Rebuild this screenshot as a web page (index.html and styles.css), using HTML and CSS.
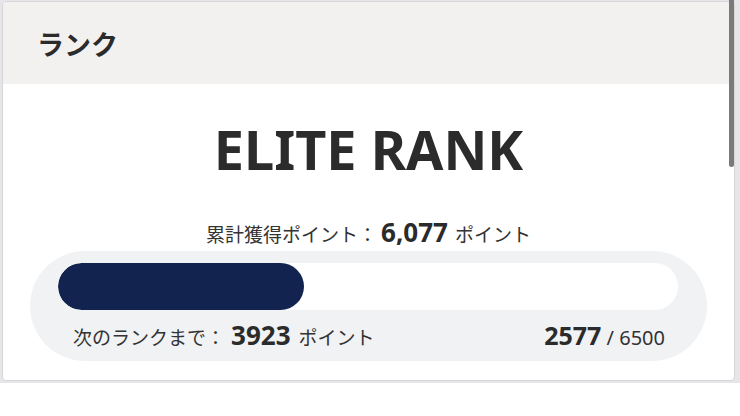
FILE: index.html
```html
<!DOCTYPE html>
<html lang="ja">
<head>
<meta charset="utf-8">
<link rel="stylesheet" href="styles.css">
</head>
<body>
<div class="frame">
  <section class="card">
    <header class="card-head">
      <h2 class="card-title">ランク</h2>
    </header>
    <div class="card-body">
      <div class="rank-name">ELITE RANK</div>
      <div class="total">累計獲得ポイント：<span class="total-num">6,077</span><span class="unit">ポイント</span></div>
      <div class="progress-box">
        <div class="track"><div class="fill" style="width:39.6%"></div></div>
        <div class="progress-row">
          <div class="next">次のランクまで：<span class="num">3923</span><span class="unit">ポイント</span></div>
          <div class="ratio"><span class="num">2577</span> / 6500</div>
        </div>
      </div>
    </div>
  </section>
  <div class="scroll-thumb"></div>
</div>
</body>
</html>
```

FILE: styles.css
```css
html, body {
  margin: 0;
  padding: 0;
  background: #ffffff;
}
body {
  font-family: "Noto Sans CJK JP", "Noto Sans", sans-serif;
  color: #333333;
}
.frame {
  position: relative;
  width: 740px;
  height: 383px;
  background: #e6e6ea;
  box-sizing: border-box;
  padding: 1px 5px 2px 2px;
}
.card {
  height: 380px;
  box-sizing: border-box;
  background: #ffffff;
  border: 1px solid #d6d6d6;
  border-radius: 4px;
  overflow: hidden;
  display: flex;
  flex-direction: column;
}
.card-head {
  height: 82px;
  background: #f2f1f0;
  display: flex;
  align-items: center;
  padding-left: 34px;
  flex-shrink: 0;
}
.card-title {
  margin: 0;
  font-size: 27px;
  font-weight: 700;
  color: #2b2b2b;
  letter-spacing: 0;
}
.card-body {
  display: flex;
  flex-direction: column;
  align-items: center;
  padding: 0 27px;
}
.rank-name {
  margin-top: 28px;
  font-family: "Noto Sans", sans-serif;
  font-size: 54px;
  font-weight: 700;
  line-height: 74px;
  color: #2b2b2b;
}
.total {
  margin-top: 31px;
  font-size: 19px;
  line-height: 30px;
  color: #333;
  display: flex;
  align-items: baseline;
}
.total-num {
  font-family: "Noto Sans", sans-serif;
  font-weight: 700;
  font-size: 26px;
  margin: 0 7px 0 4px;
  color: #2b2b2b;
}
.unit {
  font-size: 19px;
}
.progress-box {
  margin-top: 2px;
  align-self: stretch;
  background: #f1f2f4;
  border-radius: 56px;
  padding: 12px 29px 0 28px;
  height: 110px;
  box-sizing: border-box;
}
.track {
  height: 47px;
  background: #ffffff;
  border-radius: 24px;
  overflow: hidden;
}
.fill {
  height: 100%;
  background: #13234f;
  border-radius: 24px;
}
.progress-row {
  display: flex;
  justify-content: space-between;
  align-items: baseline;
  padding: 10px 13px 0 15px;
  font-size: 19px;
  line-height: 30px;
}
.progress-row .num {
  font-family: "Noto Sans", sans-serif;
  font-weight: 700;
  font-size: 26px;
  color: #2b2b2b;
}
.next .num {
  margin: 0 8px 0 6px;
}
.ratio {
  font-family: "Noto Sans", sans-serif;
  font-size: 20px;
}
.ratio .num {
  font-size: 25px;
}
.scroll-thumb {
  position: absolute;
  left: 729px;
  top: 0;
  width: 5px;
  height: 167px;
  background: #7a7a7a;
  border-radius: 0 0 3px 3px;
}
```
